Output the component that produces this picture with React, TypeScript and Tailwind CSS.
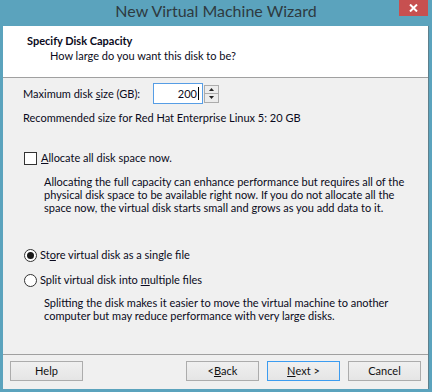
import React from "react";

const F = "font-['Lato',sans-serif]";

function Btn({ children, def }: { children: React.ReactNode; def?: boolean }) {
  return (
    <div
      className={`w-[73px] h-[20px] flex items-center justify-center text-[11px] text-[#111] bg-gradient-to-b from-[#f0f0f0] to-[#e5e5e5] border whitespace-nowrap ${
        def ? "border-[#3c9cf0]" : "border-[#acacac]"
      }`}
    >
      {children}
    </div>
  );
}

export default function App() {
  return (
    <div className={`w-[432px] h-[392px] bg-[#5ba3bd] flex flex-col ${F}`}>
      <div className="relative h-[26px] shrink-0 flex items-start justify-center">
        <span className="text-[16px] text-[#2e3a40] leading-[22px] whitespace-nowrap">New Virtual Machine Wizard</span>
        <div className="absolute top-0 right-[4px] w-[29px] h-[16px] bg-[#c75050] flex items-center justify-center">
          <svg width="9" height="8" viewBox="0 0 9 8">
            <path d="M1 0.5 L8 7.5 M8 0.5 L1 7.5" stroke="#fff" strokeWidth="2" />
          </svg>
        </div>
      </div>
      <div className="flex-1 min-h-0 mx-[3px] mb-[3px] bg-[#f0f0f0] flex flex-col border-r border-[#5d7f8c] whitespace-nowrap">
        <div className="h-[52px] shrink-0 bg-white border-b border-[#a0a0a0] pl-[24px] pt-[7px] text-[11px] leading-[15px] text-[#0a0a20]">
          <div className="font-bold">Specify Disk Capacity</div>
          <div className="pl-[23px]">How large do you want this disk to be?</div>
        </div>
        <div className="flex-1 pl-[20px] text-[11px] text-[#0a0a20] leading-[14px]">
          <div className="flex items-center mt-[5px] h-[21px]">
            <span className="w-[130px]">
              Maximum disk <u>s</u>ize (GB):
            </span>
            <div className="w-[50px] h-[21px] border border-[#569de5] bg-white flex items-center justify-end pr-[3px]">
              <span>200</span>
              <span className="w-px h-[13px] bg-black ml-px" />
            </div>
            <div className="ml-[1px] w-[15px] h-[18px] border border-[#acacac] flex flex-col bg-[#ececec]">
              <div className="flex-1 flex items-center justify-center border-b border-[#acacac]">
                <svg width="5" height="3" viewBox="0 0 5 3"><path d="M2.5 0 L5 3 L0 3Z" fill="#222" /></svg>
              </div>
              <div className="flex-1 flex items-center justify-center">
                <svg width="5" height="3" viewBox="0 0 5 3"><path d="M0 0 L5 0 L2.5 3Z" fill="#222" /></svg>
              </div>
            </div>
          </div>
          <div className="mt-[7px]">Recommended size for Red Hat Enterprise Linux 5: 20 GB</div>

          <div className="flex items-center mt-[26px]">
            <div className="w-[13px] h-[13px] border border-[#333] bg-white ml-[1px]" />
            <span className="ml-[4px]">
              <u>A</u>llocate all disk space now.
            </span>
          </div>
          <div className="pl-[21px] mt-[10px] leading-[13px]">
            Allocating the full capacity can enhance performance but requires all of the
            <br />
            physical disk space to be available right now. If you do not allocate all the
            <br />
            space now, the virtual disk starts small and grows as you add data to it.
          </div>

          <div className="flex items-center mt-[34px]">
            <div className="w-[13px] h-[13px] rounded-full border border-[#333] bg-white ml-[1px] flex items-center justify-center">
              <div className="w-[7px] h-[7px] rounded-full bg-[#1a1a1a]" />
            </div>
            <span className="ml-[3px]">
              St<u>o</u>re virtual disk as a single file
            </span>
          </div>
          <div className="flex items-center mt-[11px]">
            <div className="w-[13px] h-[13px] rounded-full border border-[#333] bg-white ml-[1px]" />
            <span className="ml-[3px]">
              Split virtual disk into <u>m</u>ultiple files
            </span>
          </div>
          <div className="pl-[21px] mt-[9px] leading-[13px]">
            Splitting the disk makes it easier to move the virtual machine to another
            <br />
            computer but may reduce performance with very large disks.
          </div>
        </div>
        <div className="border-t border-[#a0a0a0] h-[35px] shrink-0 flex items-center px-[7px] pb-[2px]">
          <Btn>Help</Btn>
          <div className="flex-1" />
          <Btn>
            &lt; <u>B</u>ack
          </Btn>
          <div className="w-[8px]" />
          <Btn def>
            <u>N</u>ext &gt;
          </Btn>
          <div className="w-[8px]" />
          <Btn>Cancel</Btn>
        </div>
      </div>
    </div>
  );
}
